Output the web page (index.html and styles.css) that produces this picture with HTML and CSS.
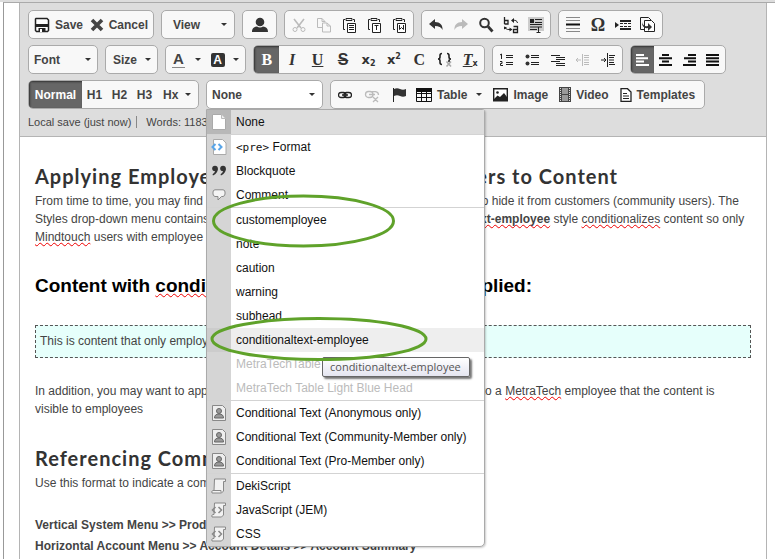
FILE: index.html
```html
<!DOCTYPE html>
<html lang="en">
<head>
<meta charset="utf-8">
<title>Editor</title>
<link rel="stylesheet" href="styles.css">
</head>
<body>
<div class="frame">
<main class="editor">
<header class="toolbar">
  <div class="row">
    <div class="group g-save">
      <button class="labelled"><svg width="16" height="16" viewBox="0 0 16 16"><path d="M2 1.500h11L14.500 3v10.500l-1 1h-11l-1-1V2z" fill="#fff" stroke="#222" stroke-width="1.500"/><path d="M1 7h14v3H1z" fill="#222"/><path d="M4.500 15v-4h7v4z" fill="#222"/><path d="M6 12h2v3H6z" fill="#fff"/></svg>Save</button>
      <button class="labelled"><svg width="14" height="14" viewBox="0 0 14 14"><path d="M2 2l10 10M12 2L2 12" stroke="#444" stroke-width="3.600"/></svg>Cancel</button>
    </div>
    <div class="group g-view"><button class="drop">View<i class="caret"></i></button></div>
    <div class="group g-user"><button aria-label="User"><svg width="16" height="16" viewBox="0 0 16 16" fill="#333"><circle cx="8" cy="5" r="4.300"/><path d="M0 15c0-4 2-5 5-5.500q3 2 6 0c3 .5 5 1.500 5 5.500z"/></svg></button></div>
    <div class="group g-clip">
      <button aria-label="Cut"><svg class="off" width="16" height="16" viewBox="0 0 16 16"><path d="M3 2l7 9M13 2l-7 9" stroke-width="1.600"/><circle cx="4" cy="12.500" r="2"/><circle cx="12" cy="12.500" r="2"/></svg></button>
      <button aria-label="Copy"><svg class="off" width="16" height="16" viewBox="0 0 16 16"><path d="M6 10.500H1.500v-9H6l3 3v1M6 1.500v3h3M6.500 6h4.500l3.500 3v6h-8zM11 6v3h3.500"/></svg></button>
      <button aria-label="Paste"><svg class="ink" width="16" height="16" viewBox="0 0 16 16"><path d="M4 12.500H2.500v-10H4M12 2.500h1.500V5M5 3.500V1.500h6v2z"/><path d="M6.500 6.500h8v9h-8z" fill="#fff"/><path d="M8 8.500h5M8 10.500h5M8 12.500h5"/></svg></button>
      <button aria-label="Paste text"><svg class="ink" width="16" height="16" viewBox="0 0 16 16"><path d="M4 12.500H2.500v-10H4M12 2.500h1.500V5M5 3.500V1.500h6v2z"/><path d="M6.500 6.500h8v9h-8z" fill="#fff"/><path d="M8.500 8.500h4M10.500 8.500V13"/></svg></button>
      <button aria-label="Paste from Word"><svg class="ink" width="16" height="16" viewBox="0 0 16 16"><path d="M4 12.500H2.500v-10H4M12 2.500h1.500V5M5 3.500V1.500h6v2z"/><path d="M6.500 6.500h8v9h-8z" fill="#fff"/><path d="M8.500 8v4.500L10.500 10.500l2 2V8"/></svg></button>
    </div>
    <div class="group g-undo">
      <button aria-label="Undo"><svg width="16" height="16" viewBox="0 0 16 16" fill="#333"><path d="M1 7l6-5v3c5 0 8 3 7.500 8C13 10 11 9 7 9v3z"/></svg></button>
      <button aria-label="Redo"><svg width="16" height="16" viewBox="0 0 16 16" fill="#bbb"><path d="M15 7L9 2v3C4 5 1 8 1.500 13 3 10 5 9 9 9v3z"/></svg></button>
      <button aria-label="Find"><svg width="16" height="16" viewBox="0 0 16 16" fill="none" stroke="#333"><circle cx="6.500" cy="6" r="4.300" stroke-width="2"/><path d="M10 9.500l4.500 5" stroke-width="2.800"/></svg></button>
      <button aria-label="Replace"><svg class="ink" width="16" height="18" viewBox="0 0 16 18"><path d="M1.500 1v7M1.500 4.500H5V8H1.500M10.500 10.500h4v6h-4V13.500h4" stroke-width="1.300"/><path d="M9 4.500q5-1 5.500 2.500M2 12q2 2 5 1.500"/><path d="M11 2L8 4.500 11 7zM1 13.500v-3l3 1zM6.500 11.500l3 2-3 2z" fill="#222" stroke="none"/></svg></button>
      <button aria-label="Select all"><svg width="16" height="18" viewBox="0 0 16 18"><path d="M0 1h16v14H0z" fill="#ccc"/><path d="M2 3h4v4H2z" fill="#222"/><path d="M7 3.500h7M7 6.500h7M2 8.500h12M2 11h12M2 13.500h7M8.500 16.500h4M10.500 11v5" stroke="#222"/></svg></button>
    </div>
    <div class="group g-insert">
      <button aria-label="Horizontal line"><svg width="14" height="18" viewBox="0 0 14 18"><path d="M0 1.500h14M0 4.500h14M0 12.500h14M0 15.500h14" stroke="#888"/><path d="M0 8.500h14" stroke="#111" stroke-width="2"/></svg></button>
      <button class="glyph omega" aria-label="Symbol">Ω</button>
      <button aria-label="Page break"><svg width="16" height="16" viewBox="0 0 16 16"><path d="M0 5l4 3-4 3z" fill="#222"/><path d="M5 4h11M5 12h11" stroke="#222" stroke-width="2"/><path d="M5 6.500h11M5 9.500h11" stroke="#222" stroke-dasharray="3 1"/></svg></button>
      <button aria-label="Reuse content"><svg class="ink" width="18" height="18" viewBox="0 0 18 18"><path d="M5 13.500H1.500v-12h8L12 4" /><path d="M5.500 4.500h7l3 3v8h-10z" fill="#fff"/><path d="M3 6q1 5 6 4V7l4 4-4 4v-3Q3 13 3 6z" fill="#333" stroke="none"/></svg></button>
    </div>
  </div>
  <div class="row">
    <div class="group g-font"><button class="drop">Font<i class="caret"></i></button></div>
    <div class="group g-size"><button class="drop">Size<i class="caret"></i></button></div>
    <div class="group g-color">
      <button class="drop" aria-label="Text colour"><span class="fore">A</span><i class="caret"></i></button>
      <button class="drop" aria-label="Background colour"><span class="back">A</span><i class="caret"></i></button>
    </div>
    <div class="group g-style">
      <button class="glyph on">B</button>
      <button class="glyph"><em>I</em></button>
      <button class="glyph"><u>U</u></button>
      <button class="glyph sans"><s>S</s></button>
      <button class="glyph script">x<sub>2</sub></button>
      <button class="glyph script">x<sup>2</sup></button>
      <button class="glyph">C</button>
      <button aria-label="Code"><svg width="16" height="16" viewBox="0 0 16 16" fill="none" stroke="#222" stroke-width="1.600"><path d="M5 1.500Q3 1.500 3 3.500V5Q3 7 1 7q2 0 2 2v1.500q0 2 2 2M10 1.500q2 0 2 2V5q0 2 2 2-2 0-2 2v1"/><path d="M9.500 9.500l4.500 5M14 9.500l-4.500 5" stroke="#aaa"/></svg></button>
      <button class="glyph clear" aria-label="Clear formatting"><em>T</em><sub>x</sub></button>
    </div>
    <div class="group g-list">
      <button aria-label="Numbered list"><svg class="ink" width="16" height="16" viewBox="0 0 16 16"><path d="M7 3.500h7M7 5.500h7M7 10.500h7M7 12.500h7M1 3l1.500-1v5M1 9.500h2v2H1.500v2H4"/></svg></button>
      <button aria-label="Bulleted list"><svg width="14" height="16" viewBox="0 0 14 16" fill="#333"><circle cx="2.500" cy="4.500" r="2"/><circle cx="2.500" cy="11.500" r="2"/><path d="M6 3.500h8M6 5.500h8M6 10.500h8M6 12.500h8" stroke="#222"/></svg></button>
      <button aria-label="Definition list"><svg width="14" height="16" viewBox="0 0 14 16"><path d="M0 3.500h9M5 5.500h9M5 7.500h9M0 9.500h9M5 11.500h9M5 13.500h9" stroke="#222"/></svg></button>
      <button aria-label="Outdent"><svg width="16" height="16" viewBox="0 0 16 16" fill="none" stroke="#bbb"><path d="M7.500 2v12M9 3.500h5M9 5.500h5M9 8h5M9 10.500h5M9 12.500h5M1 8h5M3 6L1 8l2 2"/></svg></button>
      <button aria-label="Indent"><svg class="ink" width="16" height="16" viewBox="0 0 16 16"><path d="M7.500 1v14M9 3.500h6M9 5.500h5M9 8h5M9 10.500h5M9 12.500h6M1 8h5M4 6l2 2-2 2"/></svg></button>
    </div>
    <div class="group g-align">
      <button class="on" aria-label="Align left"><svg width="13" height="12" viewBox="0 0 13 12" stroke="#fff" stroke-width="2"><path d="M0 1h8M0 4.300h12M0 7.600h8M0 11h13"/></svg></button>
      <button aria-label="Align centre"><svg width="13" height="12" viewBox="0 0 13 12" stroke="#111" stroke-width="2"><path d="M3 1h7M0 4.300h13M3 7.600h7M0 11h13"/></svg></button>
      <button aria-label="Align right"><svg width="13" height="12" viewBox="0 0 13 12" stroke="#111" stroke-width="2"><path d="M5 1h8M1 4.300h12M5 7.600h8M0 11h13"/></svg></button>
      <button aria-label="Justify"><svg width="13" height="12" viewBox="0 0 13 12" stroke="#111" stroke-width="2"><path d="M0 1h13M0 4.300h13M0 7.600h13M0 11h13"/></svg></button>
    </div>
  </div>
  <div class="row">
    <div class="group g-head">
      <button class="on normal">Normal</button><button>H1</button><button>H2</button><button>H3</button><button class="drop">Hx<i class="caret"></i></button>
    </div>
    <div class="picker">
      <select aria-label="Style"><option>None</option></select><i class="caret"></i>
      <div class="menu">
        <ul>
          <li class="first"><span class="ico"><svg width="14" height="16" viewBox="0 0 14 16"><path d="M.5.500h9l4 4v11H.5z" fill="#fff" stroke="#aaa"/><path d="M9.500.5v4h4" fill="#eee" stroke="#bbb"/></svg></span><button>None</button></li>
        </ul>
        <ul>
          <li><span class="ico"><svg width="16" height="16" viewBox="0 0 16 16"><path d="M2.500.5h9l3.500 3.500v11.500H2.500z" fill="#fff" stroke="#aaa"/><path d="M4.500 5l-3 3 3 3M7.500 5l3 3-3 3" fill="none" stroke="#59a5e8" stroke-width="2"/></svg></span><button><code>&lt;pre&gt;</code> Format</button></li>
          <li><span class="ico"><svg width="16" height="12" viewBox="0 0 16 12" fill="#333"><circle cx="4" cy="3.500" r="2.800"/><circle cx="12" cy="3.500" r="2.800"/><path d="M4.500 4.500L6.800 3.500Q7 8 2 10.500L1.500 9.500Q4.500 7.500 4.500 4.500zM12.500 4.500L14.800 3.500Q15 8 10 10.500L9.500 9.500q3-2 3-5z"/></svg></span><button>Blockquote</button></li>
          <li><span class="ico"><svg width="14" height="12" viewBox="0 0 14 12"><path d="M3 .8h8Q13 1 13 3v2q0 2-2 2.500H9.500L6 11V7.500H3Q1 7 1 5V3Q1 1 3 .8z" fill="#f4f4f4" stroke="#888"/></svg></span><button>Comment</button></li>
        </ul>
        <ul>
          <li><span class="ico"></span><button>customemployee</button></li>
          <li><span class="ico"></span><button>note</button></li>
          <li><span class="ico"></span><button>caution</button></li>
          <li><span class="ico"></span><button>warning</button></li>
          <li><span class="ico"></span><button>subhead</button></li>
          <li class="hover"><span class="ico"></span><button>conditionaltext-employee</button></li>
          <li><span class="ico"></span><button disabled>MetraTechTable</button></li>
          <li><span class="ico"></span><button disabled>MetraTech Table Light Blue Head</button></li>
        </ul>
        <ul>
          <li><span class="ico"><svg width="14" height="16" viewBox="0 0 14 16"><path d="M.5.500h10l3 3v12H.5z" fill="#eee" stroke="#888"/><circle cx="7" cy="6" r="2.500" fill="#999" stroke="#666"/><path d="M2.500 13q0-4 4.500-4t4.500 4z" fill="#999" stroke="#666"/></svg></span><button>Conditional Text (Anonymous only)</button></li>
          <li><span class="ico"><svg width="14" height="16" viewBox="0 0 14 16"><path d="M.5.500h10l3 3v12H.5z" fill="#eee" stroke="#888"/><circle cx="7" cy="6" r="2.500" fill="#999" stroke="#666"/><path d="M2.500 13q0-4 4.500-4t4.500 4z" fill="#999" stroke="#666"/></svg></span><button>Conditional Text (Community-Member only)</button></li>
          <li><span class="ico"><svg width="14" height="16" viewBox="0 0 14 16"><path d="M.5.500h10l3 3v12H.5z" fill="#eee" stroke="#888"/><circle cx="7" cy="6" r="2.500" fill="#999" stroke="#666"/><path d="M2.500 13q0-4 4.500-4t4.500 4z" fill="#999" stroke="#666"/></svg></span><button>Conditional Text (Pro-Member only)</button></li>
        </ul>
        <ul>
          <li><span class="ico"><svg width="16" height="16" viewBox="0 0 16 16"><path d="M3.500 1h11v2.500h-2V13l-2 2H1q-1-2 1-2.500h1z" fill="#f2f2f2" stroke="#888"/><path d="M3 12.500h7v2" fill="none" stroke="#888"/></svg></span><button>DekiScript</button></li>
          <li><span class="ico"><svg width="16" height="16" viewBox="0 0 16 16"><path d="M3.500 1h11v2.500h-2V13l-2 2H1q-1-2 1-2.500h1z" fill="#f2f2f2" stroke="#888"/><path d="M4.500 5l-3 3 3 3M7.500 5l3 3-3 3" fill="none" stroke="#888" stroke-width="1.500"/></svg></span><button>JavaScript (JEM)</button></li>
          <li><span class="ico"><svg width="16" height="16" viewBox="0 0 16 16"><path d="M3.500 1h11v2.500h-2V13l-2 2H1q-1-2 1-2.500h1z" fill="#f2f2f2" stroke="#888"/><path d="M4.500 5l-3 3 3 3M7.500 5l3 3-3 3" fill="none" stroke="#888" stroke-width="1.500"/></svg></span><button>CSS</button></li>
        </ul>
        <div class="tip" role="tooltip">conditionaltext-employee</div>
        <svg class="marks" width="280" height="438" viewBox="0 0 280 438" fill="none" stroke="#5fa22a" stroke-width="3"><ellipse cx="96.500" cy="111" rx="90" ry="25"/><ellipse cx="112" cy="229" rx="107" ry="20.500"/></svg>
      </div>
    </div>
    <div class="group g-media">
      <button class="tool" aria-label="Link"><svg class="ink" width="14" height="16" viewBox="1 0 14 16" stroke-width="1.300"><rect x="1.500" y="5.500" width="7.500" height="5" rx="2.500"/><rect x="7" y="5.500" width="7.500" height="5" rx="2.500"/><path d="M5 8h6"/></svg></button>
      <button class="tool" aria-label="Unlink"><svg class="off" width="16" height="16" viewBox="0 0 16 16" stroke-width="1.300"><rect x="1.500" y="4.500" width="7.500" height="6" rx="3"/><path d="M8 4.700h3.500q3 .5 3 3.300M5 7.500h6M9 10l5 5M14 10l-5 5"/></svg></button>
      <button class="tool" aria-label="Anchor"><svg width="14" height="16" viewBox="0 0 14 16"><path d="M1.500 1v14" stroke="#222"/><path d="M2 2q3-1.500 6 0t6 0v7q-3 1.500-6 0T2 9z" fill="#333"/></svg></button>
      <button class="labelled table"><svg width="16" height="14" viewBox="0 0 16 14"><path d="M.5.500h15v13H.5zM.5 5.500h15M.5 9.500h15M5.500 3v11M10.500 3v11" fill="none" stroke="#111"/><path d="M0 0h16v4H0z" fill="#111"/></svg>Table<i class="caret"></i></button>
      <button class="labelled"><svg width="15" height="14" viewBox="0 0 15 14"><path d="M.7.700h13.600v12H.7z" fill="#fff" stroke="#222" stroke-width="1.400"/><circle cx="4.500" cy="4.500" r="1.300" fill="#222"/><path d="M1 11l3.500-3.500L7 9l4-4 3 4v4H1z" fill="#222"/></svg>Image</button>
      <button class="labelled"><svg width="12" height="15" viewBox="0 0 12 15"><path d="M0 0h12v15H0z" fill="#444"/><path d="M3 1h6v6H3zM3 8h6v6H3z" fill="#999"/><path d="M1.500 1v14M10.500 1v14" stroke="#ddd" stroke-dasharray="1 1"/></svg>Video</button>
      <button class="labelled"><svg class="ink" width="12" height="14" viewBox="0 0 12 14"><path d="M1 .7h6.500L11 4v9.300H1z" fill="#fff" stroke-width="1.300"/><path d="M3 5.500h4M3 8h6M3 10.500h6"/></svg>Templates</button>
    </div>
  </div>
  <div class="status"><span>Local save (just now)</span><span>Words: 1183</span></div>
</header>
<article class="content">
  <h2>Applying Employe<span class="run r0"></span>ers to Content</h2>
  <p>From time to time, you may find <span class="run r1"></span>to hide it from customers (community users). The<br>
  Styles drop-down menu contains <span class="run r2"></span><b class="typo">text-employee</b> style <span class="typo">conditionalizes</span> content so only<br>
  <span class="typo">Mindtouch</span> users with employee</p>
  <h3>Content with <span class="typo">conditio</span><span class="run r4"></span>applied:</h3>
  <div class="note">This is content that only employees</div>
  <p>In addition, you may want to apply <span class="run r3"></span>to a <span class="typo">MetraTech</span> employee that the content is<br>visible to employees</p>
  <h2 class="second">Referencing Comm</h2>
  <p>Use this format to indicate a com</p>
  <p class="path">Vertical System Menu &gt;&gt; Produ<br>Horizontal Account Menu &gt;&gt; Account Details &gt;&gt; Account Summary</p>
</article>
</main>
</div>
</body>
</html>
```
FILE: styles.css
```css
* { box-sizing: border-box; }
body {
  margin: 0;
  background: #fff;
  color: #444;
  font: 12px/18px "Liberation Sans", Arial, sans-serif;
  border-top: 2px solid #ddd;
  overflow: hidden;
}
.frame {
  margin-left: 3px;
  padding: 0 8px 0 15px;
  border-top: 1px solid #aaa;
  border-left: 1px solid #999;
  min-height: 100vh;
}
.editor {
  border: 1px solid #b4b4b4;
  border-top: 0;
  min-height: 100vh;
}
.toolbar {
  padding: 7px 8px 5px;
  background: #ddd;
  border-bottom: 1px solid #b4b4b4;
  display: flex;
  flex-direction: column;
  gap: 6px;
}
.row { display: flex; gap: 7px; }
.group {
  display: flex;
  flex: none;
  height: 29px;
  padding: 0 1px;
  background: #f8f8f8;
  border: 1px solid #aaa;
  border-radius: 5px;
  overflow: hidden;
}
button, select {
  margin: 0;
  padding: 0;
  border: 0;
  background: none;
  color: #444;
  font: bold 12px/18px "Liberation Sans", Arial, sans-serif;
}
.group button {
  flex: 1;
  display: flex;
  align-items: center;
  justify-content: center;
}
.group .labelled { gap: 5px; flex: none; }
.group .drop { justify-content: space-between; }
.group .on {
  background: #666;
  box-shadow: inset 1px 1px 2px #333;
  color: #fff;
}
svg { display: block; flex: none; }
.ink { fill: none; stroke: #222; }
.off { fill: none; stroke: #bbb; }
.caret {
  flex: none;
  border: 3px solid transparent;
  border-top-color: #333;
  border-bottom: 0;
}

.g-save { width: 126px; padding: 0 5px; justify-content: space-between; }
.g-view { width: 74px; }
.g-view .drop { padding: 0 6px 0 10px; }
.g-user { width: 35px; }
.g-clip { width: 130px; }
.g-undo { width: 130px; }
.g-insert { width: 105px; }
.g-font { width: 70px; }
.g-size { width: 53px; }
.g-font .drop { padding: 0 5px 0 4px; }
.g-size .drop { padding: 0 5px 0 6px; }
.g-color { width: 81px; }
.g-color .drop { padding: 0 5px; }
.g-style { width: 232px; padding-left: 0; }
.g-list { width: 131px; }
.g-align { width: 96px; padding-left: 0; }
.g-head { width: 171px; padding-left: 0; }
.g-head .normal { flex: none; width: 53px; }
.g-head .drop { flex: none; width: 40px; padding: 0 6px; }
.g-media { width: 375px; padding: 0; }
.g-media .tool { flex: none; width: 27px; }
.g-media .labelled { margin-left: 11px; }
.g-media .table { margin-left: 4px; }
.g-media .caret { margin-left: 4px; }

.group .glyph { font: bold 16px/20px "Liberation Serif", serif; color: #333; }
.group .omega { font-size: 18px; }
.group .glyph.on { color: #fff; }
.group .sans { font-family: "Liberation Sans", sans-serif; }
.group .script { font: bold 13px/20px "DejaVu Sans", sans-serif; }
.glyph sub, .glyph sup { font: bold 8px/8px "DejaVu Sans", sans-serif; }
.glyph sub { align-self: flex-end; padding-bottom: 5px; }
.glyph sup { align-self: flex-start; padding-top: 7px; }
.clear em { text-decoration: underline; }
.fore { font-size: 15px; border-bottom: 1px solid #888; padding: 0 1px; line-height: 16px; }
.back { width: 14px; height: 14px; border-radius: 2px; background: #333; color: #fff; text-align: center; line-height: 14px; }

.picker {
  position: relative;
  display: flex;
  align-items: center;
  width: 117px;
  height: 29px;
  background: #fff;
  border: 1px solid #aaa;
  border-radius: 5px;
  padding-right: 7px;
}
.picker select { flex: 1; appearance: none; padding-left: 5px; outline: 0; }

.menu {
  position: absolute;
  z-index: 5;
  top: 28px;
  left: -1px;
  width: 279px;
  background: #fff;
  border: 1px solid #aaa;
  border-radius: 0 3px 5px 5px;
  box-shadow: 1px 1px 2px #0003;
}
.menu ul { margin: 0; padding: 0; list-style: none; }
.menu ul + ul { border-top: 1px solid #d3d3d3; }
.menu li { display: flex; height: 24px; }
.menu button {
  flex: 1;
  padding-left: 5px;
  text-align: left;
  font-weight: normal;
  color: #111;
}
.menu button:disabled { color: #bbb; }
.menu code { font: 11px/18px "DejaVu Sans Mono", monospace; }
.ico {
  width: 24px;
  background: #d5d5d5;
  display: flex;
  align-items: center;
  justify-content: center;
}
.menu .first { background: #ddd; }
.first .ico { background: #b8b8b8; }
.hover { background: #eee; }
.hover .ico { background: #ccc; }
.tip {
  position: absolute;
  left: 115px;
  top: 247px;
  padding: 0 8px 0 7px;
  border: 1px solid #666;
  border-radius: 2px;
  background: linear-gradient(#fff, #e4e5f0);
  box-shadow: 2px 2px 2px #0008;
  color: #555;
  font: 11px/18px "Open Sans", "Noto Sans", sans-serif;
}
.marks { position: absolute; left: 0; top: 0; pointer-events: none; }

.status { display: flex; align-items: flex-start; font-size: 11px; line-height: 12px; padding-top: 1px; height: 16px; }
.status span + span { margin-left: 5px; padding-left: 9px; border-left: 1px solid #888; }

.content { padding: 27px 15px 0; }
.content p, .content h2, .content h3 { margin: 0; white-space: nowrap; }
.content h2 {
  margin-bottom: 4px;
  color: #333;
  font: bold 20px/24px Lato, sans-serif;
  letter-spacing: 1px;
}
.content h3 { margin-top: 28px; color: #000; font: bold 19px/24px "Liberation Sans", sans-serif; }
.note {
  margin: 27px 0 24px;
  padding: 7px 4px;
  border: 1px dashed #555;
  background: #e6fffb;
  line-height: 17px;
}
.content .second { margin-top: 28px; }
.content .path { margin-top: 23px; line-height: 21px; font-weight: bold; }
.run { display: inline-block; }
.r0 { width: 265px; }
.r1 { width: 272px; }
.r2 { width: 257px; }
.r3 { width: 262px; }
.r4 { width: 230px; }
.typo { text-decoration: underline wavy #e00 1px; text-decoration-skip-ink: none; }
```
